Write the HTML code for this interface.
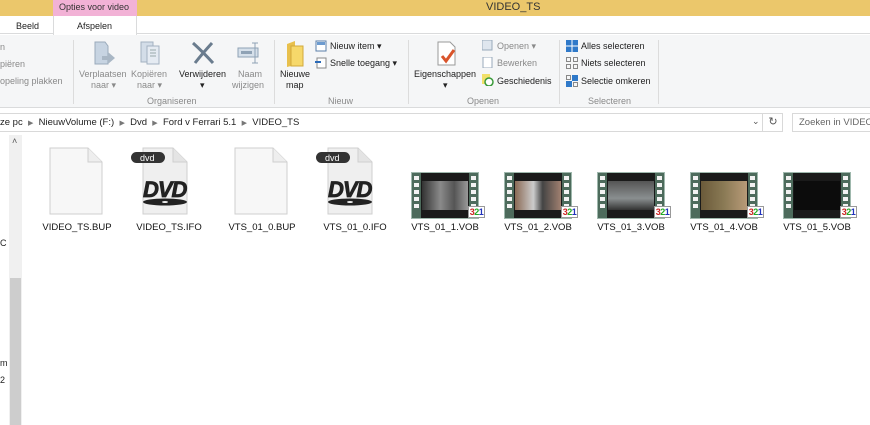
<!DOCTYPE html>
<html><head><meta charset="utf-8"><style>
*{margin:0;padding:0;box-sizing:border-box}
body{width:870px;height:425px;overflow:hidden;background:#fff;font-family:"Liberation Sans",sans-serif;font-size:9px;color:#222;position:relative}
.a{position:absolute;white-space:nowrap}
.g{color:#8a8a8a}
.sep{position:absolute;top:40px;width:1px;height:64px;background:#dcdcdc}
.doc{position:absolute;width:54px;height:68px}
.vob{position:absolute;width:68px;height:47px;background:#1a1a1a;border:1px solid #9fb8ad}
.vob .st{position:absolute;top:0;bottom:0;width:9px;background:#4d6b5c}
.vob .st i{display:block;width:5px;height:4px;background:#f2f2f2;margin:3px 2px 2px}
.vob .pic{position:absolute;left:10px;right:10px;top:8px;bottom:8px}
.badge{position:absolute;width:17px;height:12px;background:#fff;border:1px solid #999;font:bold 9px "Liberation Sans",sans-serif;line-height:10px;text-align:center;letter-spacing:-0.5px}
.fn{position:absolute;top:222px;font-size:9.5px;color:#111;text-align:center;width:90px}
</style></head><body>
<div class="a" style="left:0;top:0;width:870px;height:16px;background:#ebc76b"></div>
<div class="a" style="left:53px;top:0;width:84px;height:16px;background:#f2b2d6"></div>
<div class="a" style="left:59px;top:2px;font-size:9px;color:#333">Opties voor video</div>
<div class="a" style="left:486px;top:1px;font-size:11px;color:#333">VIDEO_TS</div>
<div class="a" style="left:0;top:16px;width:870px;height:18px;background:#fff;border-bottom:1px solid #dadbdc"></div>
<div class="a" style="left:53px;top:16px;width:84px;height:19px;background:#fff;border-left:1px solid #dadbdc;border-right:1px solid #dadbdc"></div>
<div class="a" style="left:16px;top:21px;font-size:9px">Beeld</div>
<div class="a" style="left:77px;top:21px;font-size:9px">Afspelen</div>
<div class="a" style="left:0;top:35px;width:870px;height:73px;background:#f5f6f7;border-bottom:1px solid #dadbdc"></div>
<div class="sep" style="left:73px"></div><div class="sep" style="left:274px"></div><div class="sep" style="left:408px"></div><div class="sep" style="left:559px"></div><div class="sep" style="left:658px"></div>
<div class="a g" style="left:0;top:42px">n</div>
<div class="a g" style="left:0;top:59px">piëren</div>
<div class="a g" style="left:0;top:76px">opeling plakken</div>
<svg class="a" style="left:92px;top:40px" width="26" height="26"><path d="M3 2h10l3 4v18H3z" fill="#c7d4e2" stroke="#9aaabb"/><path d="M10 16h6v-4l7 6-7 6v-4h-6z" fill="#a9b7c5"/></svg>
<div class="a g" style="left:79px;top:69px">Verplaatsen</div><div class="a g" style="left:91px;top:80px">naar ▾</div>
<svg class="a" style="left:138px;top:40px" width="26" height="26"><path d="M3 2h12v20H3z" fill="#d3dde8" stroke="#a3b1c1"/><path d="M9 6h12v18H9z" fill="#e5ebf2" stroke="#a3b1c1"/><path d="M12 10h6M12 13h6M12 16h6" stroke="#9aa"/></svg>
<div class="a g" style="left:131px;top:69px">Kopiëren</div><div class="a g" style="left:137px;top:80px">naar ▾</div>
<svg class="a" style="left:190px;top:40px" width="26" height="26"><path d="M3 3Q13 12 23 23M22 3Q12 14 5 23" stroke="#6a7c8e" stroke-width="3" fill="none"/></svg>
<div class="a" style="left:179px;top:69px">Verwijderen</div><div class="a" style="left:200px;top:80px">▾</div>
<svg class="a" style="left:236px;top:42px" width="26" height="22"><rect x="2" y="6" width="20" height="9" fill="#d6e0ea" stroke="#8fa2b5"/><rect x="5" y="9" width="11" height="3" fill="#8fa2b5"/><path d="M19 1v20M16 1h6M16 21h6" stroke="#8fa2b5"/></svg>
<div class="a g" style="left:238px;top:69px">Naam</div><div class="a g" style="left:232px;top:80px">wijzigen</div>
<div class="a g" style="left:147px;top:96px">Organiseren</div>
<svg class="a" style="left:285px;top:40px" width="20" height="28"><path d="M2 4l8-3v24l-8 2z" fill="#e8c04d"/><path d="M6 6h12v20H6z" fill="#f6d86a" stroke="#d1a93b"/></svg>
<div class="a" style="left:280px;top:69px">Nieuwe</div><div class="a" style="left:286px;top:80px">map</div>
<svg class="a" style="left:315px;top:40px" width="12" height="12"><rect x="1" y="1" width="10" height="10" fill="#fff" stroke="#5a7fa8"/><rect x="2" y="2" width="8" height="3" fill="#6c9bd0"/></svg>
<div class="a" style="left:330px;top:41px">Nieuw item ▾</div>
<svg class="a" style="left:315px;top:57px" width="12" height="12"><rect x="2" y="1" width="9" height="10" fill="#fff" stroke="#888"/><path d="M0 5h6" stroke="#2a6ab8" stroke-width="2"/></svg>
<div class="a" style="left:330px;top:58px">Snelle toegang ▾</div>
<div class="a g" style="left:328px;top:96px">Nieuw</div>
<svg class="a" style="left:436px;top:41px" width="22" height="26"><path d="M2 1h12l5 5v18H2z" fill="#fff" stroke="#999"/><path d="M6 15l4 5 8-11" stroke="#d9542b" stroke-width="3" fill="none"/></svg>
<div class="a" style="left:414px;top:69px">Eigenschappen</div><div class="a" style="left:443px;top:80px">▾</div>
<svg class="a" style="left:482px;top:40px" width="11" height="11"><rect x="0" y="0" width="10" height="10" fill="#dfe6ee" stroke="#9ab"/></svg>
<div class="a g" style="left:497px;top:41px">Openen ▾</div>
<svg class="a" style="left:482px;top:57px" width="11" height="11"><rect x="1" y="0" width="9" height="11" fill="#fff" stroke="#9ab"/></svg>
<div class="a g" style="left:497px;top:58px">Bewerken</div>
<svg class="a" style="left:482px;top:74px" width="12" height="12"><rect x="0" y="0" width="8" height="10" fill="#f1e06a"/><circle cx="7" cy="8" r="4" fill="#fff" stroke="#3a9a3a" stroke-width="1.5"/></svg>
<div class="a" style="left:497px;top:76px">Geschiedenis</div>
<div class="a g" style="left:467px;top:96px">Openen</div>
<svg class="a" style="left:566px;top:40px" width="12" height="12"><rect x="0" y="0" width="12" height="12" fill="#2f79c9"/><path d="M6 0v12M0 6h12" stroke="#fff"/></svg>
<div class="a" style="left:581px;top:41px">Alles selecteren</div>
<svg class="a" style="left:566px;top:57px" width="12" height="12"><rect x=".5" y=".5" width="4" height="4" fill="none" stroke="#888"/><rect x="7.5" y=".5" width="4" height="4" fill="none" stroke="#888"/><rect x=".5" y="7.5" width="4" height="4" fill="none" stroke="#888"/><rect x="7.5" y="7.5" width="4" height="4" fill="none" stroke="#888"/></svg>
<div class="a" style="left:581px;top:58px">Niets selecteren</div>
<svg class="a" style="left:566px;top:75px" width="12" height="12"><rect x=".5" y=".5" width="4" height="4" fill="none" stroke="#888"/><rect x="6" y="0" width="6" height="6" fill="#2f79c9"/><rect x="0" y="6" width="6" height="6" fill="#2f79c9"/><rect x="7.5" y="7.5" width="4" height="4" fill="none" stroke="#888"/></svg>
<div class="a" style="left:581px;top:76px">Selectie omkeren</div>
<div class="a g" style="left:588px;top:96px">Selecteren</div>
<div class="a" style="left:0;top:113px;width:783px;height:19px;border:1px solid #d9d9d9;border-left:none"></div>
<div class="a" style="left:0;top:117px;font-size:9.5px">ze pc &nbsp;<span style="color:#777;font-size:7px">▶</span>&nbsp; NieuwVolume (F:) &nbsp;<span style="color:#777;font-size:7px">▶</span>&nbsp; Dvd &nbsp;<span style="color:#777;font-size:7px">▶</span>&nbsp; Ford v Ferrari 5.1 &nbsp;<span style="color:#777;font-size:7px">▶</span>&nbsp; VIDEO_TS</div>
<div class="a" style="left:752px;top:116px;color:#555">⌄</div>
<div class="a" style="left:762px;top:113px;width:21px;height:19px;border-left:1px solid #d9d9d9;text-align:center;line-height:18px;font-size:11px;color:#555">↻</div>
<div class="a" style="left:792px;top:113px;width:80px;height:19px;border:1px solid #d9d9d9;padding:3px 0 0 6px;font-size:9.5px;color:#666">Zoeken in VIDEO_</div>
<div class="a" style="left:0;top:238px;font-size:9px">C</div>
<div class="a" style="left:0;top:358px;font-size:9px">m</div>
<div class="a" style="left:0;top:375px;font-size:9px">2</div>
<div class="a" style="left:9px;top:135px;width:13px;height:290px;background:#f0f0f0"></div>
<div class="a" style="left:10px;top:278px;width:11px;height:147px;background:#cdcdcd"></div>
<div class="a" style="left:12px;top:136px;font-size:9px;color:#555">˄</div>
<svg class="doc" style="left:49px;top:147px" viewBox="0 0 54 68"><path d="M1 1h38l14 14v52H1z" fill="#f7f7f7" stroke="#cfcfcf"/><path d="M39 1v14h14" fill="#eee" stroke="#cfcfcf"/></svg>
<svg class="doc" style="left:234px;top:147px" viewBox="0 0 54 68"><path d="M1 1h38l14 14v52H1z" fill="#f7f7f7" stroke="#cfcfcf"/><path d="M39 1v14h14" fill="#eee" stroke="#cfcfcf"/></svg>
<svg class="a" style="left:130px;top:147px" width="60" height="68"><path d="M13 1h30l14 14v52H13z" fill="#efefef" stroke="#cfcfcf"/><path d="M43 1v14h14" fill="#e4e4e4" stroke="#cfcfcf"/><rect x="1" y="5" width="34" height="11" rx="5.5" fill="#333"/><text x="10" y="14" font-size="9" fill="#fff" font-family="Liberation Sans">dvd</text><text x="13" y="50" font-size="22" font-weight="bold" font-style="italic" fill="#222" font-family="Liberation Sans" letter-spacing="-1" stroke="#222" stroke-width="0.8">DVD</text><ellipse cx="35" cy="55" rx="22" ry="3.5" fill="#222"/><ellipse cx="35" cy="55" rx="3" ry="1" fill="#eee"/></svg>
<svg class="a" style="left:315px;top:147px" width="60" height="68"><path d="M13 1h30l14 14v52H13z" fill="#efefef" stroke="#cfcfcf"/><path d="M43 1v14h14" fill="#e4e4e4" stroke="#cfcfcf"/><rect x="1" y="5" width="34" height="11" rx="5.5" fill="#333"/><text x="10" y="14" font-size="9" fill="#fff" font-family="Liberation Sans">dvd</text><text x="13" y="50" font-size="22" font-weight="bold" font-style="italic" fill="#222" font-family="Liberation Sans" letter-spacing="-1" stroke="#222" stroke-width="0.8">DVD</text><ellipse cx="35" cy="55" rx="22" ry="3.5" fill="#222"/><ellipse cx="35" cy="55" rx="3" ry="1" fill="#eee"/></svg>
<div class="fn" style="left:32px">VIDEO_TS.BUP</div>
<div class="fn" style="left:124px">VIDEO_TS.IFO</div>
<div class="fn" style="left:217px">VTS_01_0.BUP</div>
<div class="fn" style="left:310px">VTS_01_0.IFO</div>
<div class="vob" style="left:411px;top:172px"><div class="st" style="left:0"><i></i><i></i><i></i><i></i><i></i></div><div class="st" style="right:0"><i></i><i></i><i></i><i></i><i></i></div><div class="pic" style="background:linear-gradient(90deg,#333,#8a8a8a 40%,#555 70%,#999)"></div></div>
<div class="vob" style="left:504px;top:172px"><div class="st" style="left:0"><i></i><i></i><i></i><i></i><i></i></div><div class="st" style="right:0"><i></i><i></i><i></i><i></i><i></i></div><div class="pic" style="background:linear-gradient(90deg,#8a6a55,#ccc 40%,#444 60%,#a08070)"></div></div>
<div class="vob" style="left:597px;top:172px"><div class="st" style="left:0"><i></i><i></i><i></i><i></i><i></i></div><div class="st" style="right:0"><i></i><i></i><i></i><i></i><i></i></div><div class="pic" style="background:linear-gradient(180deg,#555,#8a8f90 60%,#333)"></div></div>
<div class="vob" style="left:690px;top:172px"><div class="st" style="left:0"><i></i><i></i><i></i><i></i><i></i></div><div class="st" style="right:0"><i></i><i></i><i></i><i></i><i></i></div><div class="pic" style="background:linear-gradient(90deg,#6b5a3a,#8a7a55 50%,#b89a78)"></div></div>
<div class="vob" style="left:783px;top:172px"><div class="st" style="left:0"><i></i><i></i><i></i><i></i><i></i></div><div class="st" style="right:0"><i></i><i></i><i></i><i></i><i></i></div><div class="pic" style="background:#0c0c0c"></div></div>
<div class="badge" style="left:468px;top:206px"><span style="color:#c22">3</span><span style="color:#2a2">2</span><span style="color:#23b">1</span></div>
<div class="badge" style="left:561px;top:206px"><span style="color:#c22">3</span><span style="color:#2a2">2</span><span style="color:#23b">1</span></div>
<div class="badge" style="left:654px;top:206px"><span style="color:#c22">3</span><span style="color:#2a2">2</span><span style="color:#23b">1</span></div>
<div class="badge" style="left:747px;top:206px"><span style="color:#c22">3</span><span style="color:#2a2">2</span><span style="color:#23b">1</span></div>
<div class="badge" style="left:840px;top:206px"><span style="color:#c22">3</span><span style="color:#2a2">2</span><span style="color:#23b">1</span></div>
<div class="fn" style="left:400px">VTS_01_1.VOB</div>
<div class="fn" style="left:493px">VTS_01_2.VOB</div>
<div class="fn" style="left:586px">VTS_01_3.VOB</div>
<div class="fn" style="left:679px">VTS_01_4.VOB</div>
<div class="fn" style="left:772px">VTS_01_5.VOB</div>
</body></html>
